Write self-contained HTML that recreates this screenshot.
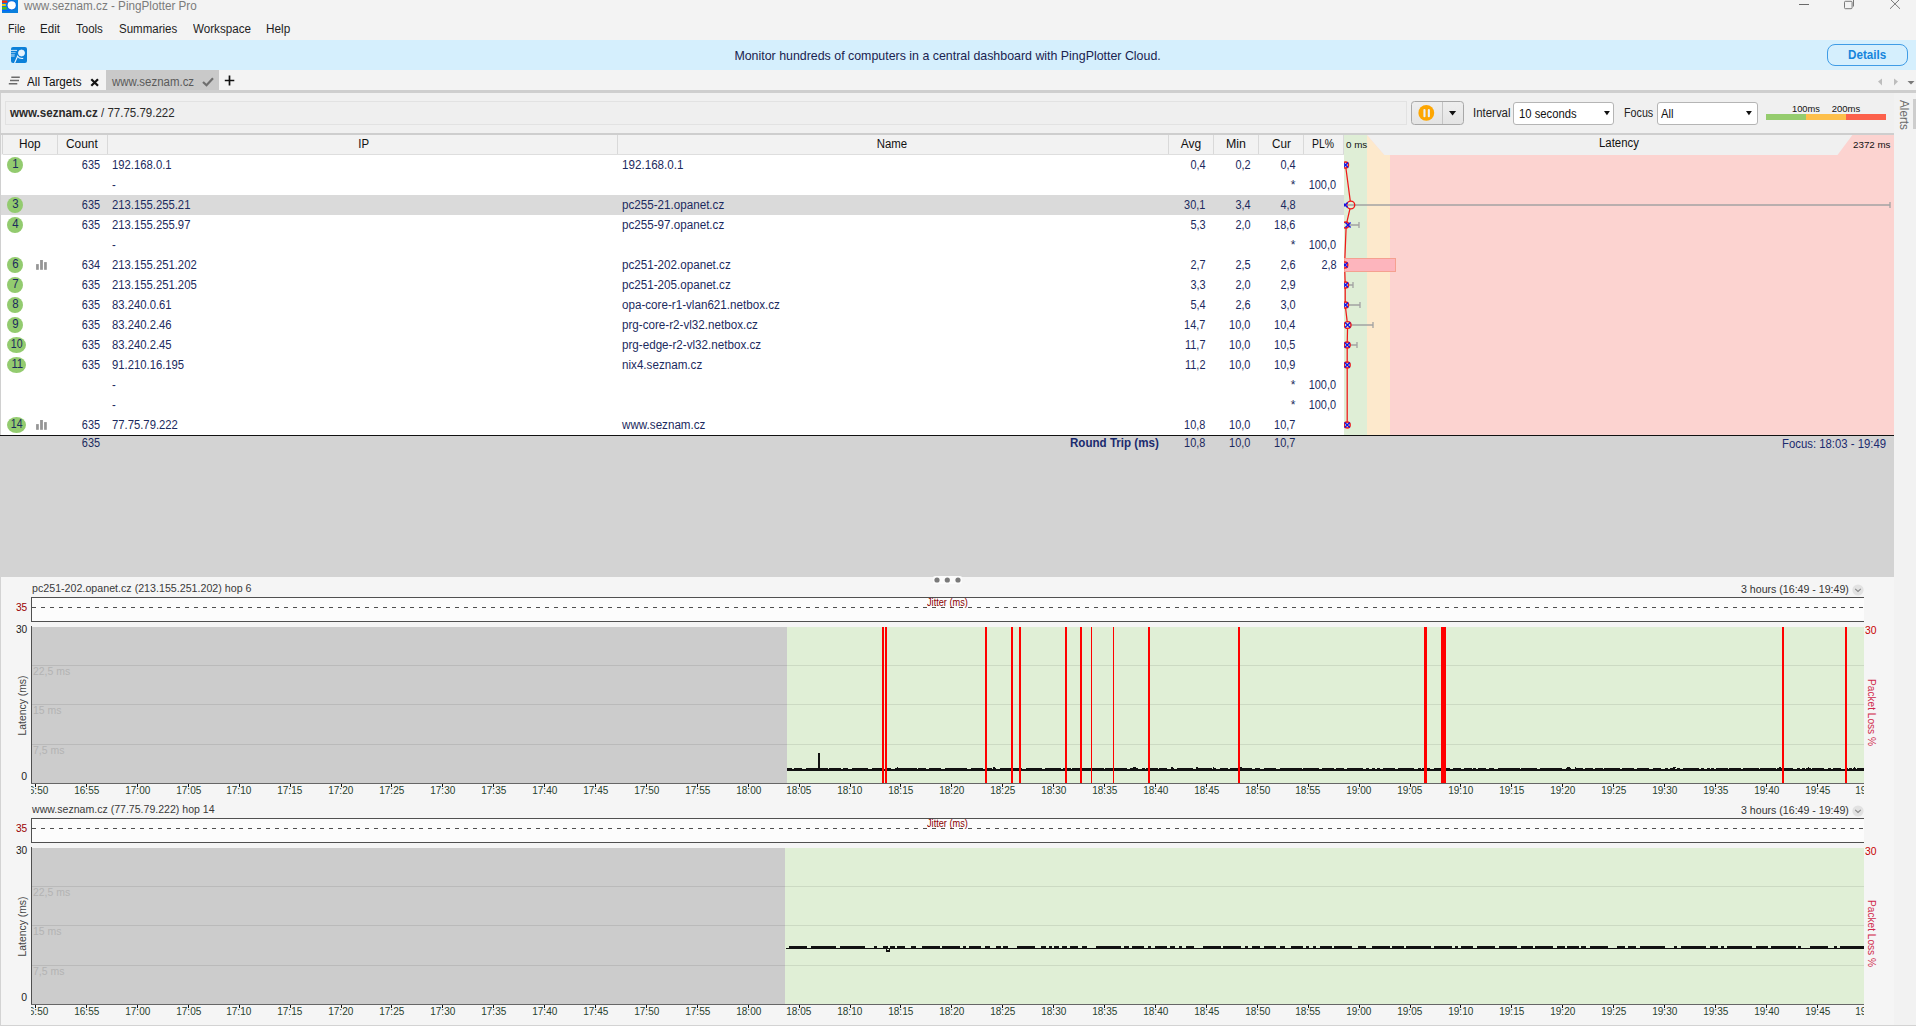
<!DOCTYPE html><html><head><meta charset="utf-8"><style>
*{margin:0;padding:0;box-sizing:border-box}
html,body{width:1916px;height:1026px;overflow:hidden;background:#f0f0f0;font-family:"Liberation Sans",sans-serif;font-size:12px;color:#000;position:relative}
.t{position:absolute;white-space:nowrap}
.b{position:absolute}
svg{position:absolute;overflow:visible}
</style></head><body>

<div class="b" style="left:0px;top:0px;width:1916px;height:40px;background:#f3f3f3;"></div>
<svg style="left:2px;top:0" width="17" height="14"><rect x="0" y="0" width="16" height="13" fill="#0a7fdc"/>
<rect x="0" y="0" width="5" height="0.7" fill="#7a6f80"/><rect x="0" y="0.8" width="5.4" height="2" fill="#ff2a00"/><rect x="0" y="4" width="3.8" height="1.9" fill="#ffcc00"/><rect x="0" y="7" width="4.6" height="2.4" fill="#55bb10"/><rect x="0" y="10" width="8" height="1.2" fill="#0066ff"/>
<circle cx="9.7" cy="5.3" r="4.9" fill="#0060e6"/><circle cx="9.7" cy="5.3" r="4.1" fill="#fff"/></svg>
<div class="t" style="left:24.30px;top:0.04px;font-size:12px;line-height:12px;color:#7b7b7b;transform:scaleX(0.9735);transform-origin:left 0;">www.seznam.cz - PingPlotter Pro</div>
<div class="b" style="left:1799px;top:4px;width:10px;height:1px;background:#6a6a6a"></div>
<svg style="left:1844px;top:0" width="12" height="10"><rect x="0.5" y="1.3" width="7.6" height="7.4" rx="1" fill="none" stroke="#6a6a6a" stroke-width="0.9"/><path d="M9.5 0V6.5" fill="none" stroke="#6a6a6a" stroke-width="0.9"/></svg>
<svg style="left:1889px;top:-1" width="13" height="11"><path d="M1 0 L11 9.8 M11 0 L1 9.8" stroke="#6a6a6a" stroke-width="0.9"/></svg>
<div class="t" style="left:7.50px;top:22.84px;font-size:12px;line-height:12px;color:#1e1e1e;transform:scaleX(0.8895);transform-origin:left 0;">File</div>
<div class="t" style="left:40.40px;top:22.84px;font-size:12px;line-height:12px;color:#1e1e1e;transform:scaleX(0.9624);transform-origin:left 0;">Edit</div>
<div class="t" style="left:76.20px;top:22.84px;font-size:12px;line-height:12px;color:#1e1e1e;transform:scaleX(0.9567);transform-origin:left 0;">Tools</div>
<div class="t" style="left:119.00px;top:22.84px;font-size:12px;line-height:12px;color:#1e1e1e;transform:scaleX(0.9591);transform-origin:left 0;">Summaries</div>
<div class="t" style="left:193.00px;top:22.84px;font-size:12px;line-height:12px;color:#1e1e1e;transform:scaleX(0.9699);transform-origin:left 0;">Workspace</div>
<div class="t" style="left:266.20px;top:22.84px;font-size:12px;line-height:12px;color:#1e1e1e;transform:scaleX(0.9805);transform-origin:left 0;">Help</div>
<div class="b" style="left:0px;top:40px;width:1916px;height:30px;background:#d5effd;"></div>
<svg style="left:11px;top:47px" width="16" height="16"><rect x="0" y="0" width="16" height="16" rx="2" fill="#0b80d9"/>
<path d="M0 3.4H6M0 9H3.6" stroke="#e6f4fd" stroke-width="0.9"/><path d="M0 5.5H4.6M0 7.4H3.8" stroke="#9fd0f3" stroke-width="0.8"/>
<circle cx="10.5" cy="6" r="3" fill="#e3f2fd" stroke="#f4faff" stroke-width="0.8"/>
<path d="M3.6 16 L6.6 9.2 Q8 11.8 12.2 11.4" stroke="#eef7fe" stroke-width="1.1" fill="none"/></svg>
<div class="t" style="left:734.40px;top:49.50px;font-size:12.4px;line-height:12.4px;color:#1a2350;">Monitor hundreds of computers in a central dashboard with PingPlotter Cloud.</div>
<div class="b" style="left:1826.5px;top:44.3px;width:81px;height:21.3px;border:1.7px solid #3f9ce6;border-radius:8px"></div>
<div class="t" style="left:1847.80px;top:48.84px;font-size:12px;line-height:12px;color:#1585dc;font-weight:bold;transform:scaleX(0.9707);transform-origin:left 0;">Details</div>
<div class="b" style="left:0px;top:70px;width:1916px;height:21px;background:#f3f3f3;"></div>
<svg style="left:8px;top:76px" width="13" height="9"><path d="M3.3 1.3h8.5M2 4.5h9M0.8 7.7h8.5" stroke="#6b6b6b" stroke-width="1.5"/></svg>
<div class="t" style="left:26.90px;top:75.84px;font-size:12px;line-height:12px;color:#111;transform:scaleX(0.9766);transform-origin:left 0;">All Targets</div>
<svg style="left:90px;top:78px" width="10" height="9"><path d="M1.3 1.2 L8 7.8 M8 1.2 L1.3 7.8" stroke="#111" stroke-width="2.2"/></svg>
<div class="b" style="left:106px;top:70px;width:113px;height:21px;background:#c9c9c9;"></div>
<div class="t" style="left:112.10px;top:75.84px;font-size:12px;line-height:12px;color:#5a5a5a;transform:scaleX(0.9544);transform-origin:left 0;">www.seznam.cz</div>
<svg style="left:202px;top:77px" width="12" height="10"><path d="M1 5 L4.5 8.3 L11 1.3" stroke="#6e6e6e" stroke-width="2.2" fill="none"/></svg>
<svg style="left:224px;top:75px" width="11" height="11"><path d="M5.5 0.5v10M0.8 5.5h9.5" stroke="#111" stroke-width="1.7"/></svg>
<svg style="left:1876px;top:77px" width="40" height="10"><path d="M6 1.5 L2 4.5 L6 8.5Z" fill="#bdbdbd"/><path d="M18 1.5 L22 4.5 L18 8.5Z" fill="#bdbdbd"/><path d="M31.5 4 L38.5 4 L35 7.5Z" fill="#7a7a7a"/></svg>
<div class="b" style="left:0px;top:90px;width:1916px;height:3px;background:#cecece;"></div>
<div class="b" style="left:0px;top:93px;width:1894px;height:40px;background:#f0f0f0;border-left:1px solid #d0d0d0"></div>
<div class="b" style="left:5px;top:101px;width:1402px;height:24px;border:1px solid #e2e2e2;background:#efefef"></div>
<div class="t" style="left:10.00px;top:106.84px;font-size:12px;line-height:12px;color:#2a2a2a;font-weight:bold;transform:scaleX(0.9646);transform-origin:left 0;">www.seznam.cz</div>
<div class="t" style="left:100.80px;top:106.84px;font-size:12px;line-height:12px;color:#2a2a2a;transform:scaleX(0.9591);transform-origin:left 0;">/ 77.75.79.222</div>
<div class="b" style="left:1410.5px;top:101px;width:53px;height:23.8px;border:1px solid #a8a8a8;border-radius:3.5px;background:linear-gradient(#eeeeee,#e4e4e4)"></div>
<div class="b" style="left:1441.5px;top:102px;width:1.2px;height:22px;background:#c4c4c4;"></div>
<svg style="left:1418px;top:105px" width="17" height="17"><circle cx="8.3" cy="7.9" r="7.9" fill="#fda602"/><rect x="5.4" y="4" width="2.1" height="8.3" rx="1" fill="#e8f1ff"/><rect x="9.8" y="4" width="2.1" height="8.3" rx="1" fill="#e8f1ff"/></svg>
<svg style="left:1448.9px;top:110.8px" width="8" height="5"><path d="M0 0h7.1L3.55 4.4Z" fill="#111"/></svg>
<div class="t" style="left:1472.50px;top:107.04px;font-size:12px;line-height:12px;color:#222;transform:scaleX(0.9529);transform-origin:left 0;">Interval</div>
<div class="b" style="left:1513.4px;top:101.5px;width:101px;height:23px;border:1px solid #b5b5b5;border-radius:3px;background:#fff"></div>
<div class="t" style="left:1519.30px;top:107.84px;font-size:12px;line-height:12px;color:#111;transform:scaleX(0.9384);transform-origin:left 0;">10 seconds</div>
<svg style="left:1603.6px;top:111px" width="7" height="5"><path d="M0 0h5.9L2.95 4.2Z" fill="#111"/></svg>
<div class="t" style="left:1623.70px;top:107.04px;font-size:12px;line-height:12px;color:#222;transform:scaleX(0.8936);transform-origin:left 0;">Focus</div>
<div class="b" style="left:1656.6px;top:101.5px;width:101px;height:23px;border:1px solid #b5b5b5;border-radius:3px;background:#fff"></div>
<div class="t" style="left:1661.20px;top:107.84px;font-size:12px;line-height:12px;color:#111;transform:scaleX(0.9447);transform-origin:left 0;">All</div>
<svg style="left:1746.4px;top:111px" width="7" height="5"><path d="M0 0h5.9L2.95 4.2Z" fill="#111"/></svg>
<div class="t" style="left:1792.20px;top:103.56px;font-size:9.5px;line-height:9.5px;color:#111;transform:scaleX(0.9784);transform-origin:left 0;">100ms</div>
<div class="t" style="left:1831.70px;top:103.56px;font-size:9.5px;line-height:9.5px;color:#111;">200ms</div>
<div class="b" style="left:1766px;top:114px;width:40px;height:6px;background:#95cc6e;"></div>
<div class="b" style="left:1806px;top:114px;width:40px;height:6px;background:#fdbf4b;"></div>
<div class="b" style="left:1846px;top:114px;width:40px;height:6px;background:#fc614c;"></div>
<div class="b" style="left:1894px;top:93px;width:22px;height:933px;background:#f2f2f2;"></div>
<div class="b" style="left:1913px;top:99px;width:3px;height:30px;background:#cdcdcd;"></div>
<div class="t" style="left:1889.26px;top:108.84px;font-size:12px;line-height:12px;color:#6a6a6a;transform:rotate(90deg) scaleX(0.9780);transform-origin:center center;">Alerts</div>
<div class="b" style="left:0px;top:133px;width:1894px;height:2px;background:#cecece;"></div>
<div class="b" style="left:0px;top:135px;width:1344px;height:20px;background:#f2f2f2;border-left:1px solid #d0d0d0"></div>
<div class="b" style="left:3px;top:154px;width:1341px;height:1px;background:#dedede;"></div>
<div class="b" style="left:2px;top:135px;width:1px;height:19px;background:#d6d6d6;"></div>
<div class="b" style="left:57px;top:135px;width:1px;height:19px;background:#d9d9d9;"></div>
<div class="b" style="left:107px;top:135px;width:1px;height:19px;background:#d9d9d9;"></div>
<div class="b" style="left:617px;top:135px;width:1px;height:19px;background:#d9d9d9;"></div>
<div class="b" style="left:1168px;top:135px;width:1px;height:19px;background:#d9d9d9;"></div>
<div class="b" style="left:1213px;top:135px;width:1px;height:19px;background:#d9d9d9;"></div>
<div class="b" style="left:1258px;top:135px;width:1px;height:19px;background:#d9d9d9;"></div>
<div class="b" style="left:1303px;top:135px;width:1px;height:19px;background:#d9d9d9;"></div>
<div class="b" style="left:1343px;top:135px;width:1px;height:19px;background:#d9d9d9;"></div>
<div class="t" style="left:19.40px;top:137.84px;font-size:12px;line-height:12px;color:#111;transform:scaleX(0.9857);transform-origin:left 0;">Hop</div>
<div class="t" style="left:66.20px;top:137.84px;font-size:12px;line-height:12px;color:#111;transform:scaleX(0.9931);transform-origin:left 0;">Count</div>
<div class="t" style="left:1180.80px;top:137.84px;font-size:12px;line-height:12px;color:#111;">Avg</div>
<div class="t" style="left:1226.40px;top:137.84px;font-size:12px;line-height:12px;color:#111;transform:scaleX(1.0291);transform-origin:left 0;">Min</div>
<div class="t" style="left:1271.80px;top:137.84px;font-size:12px;line-height:12px;color:#111;transform:scaleX(0.9722);transform-origin:left 0;">Cur</div>
<div class="t" style="left:1312.00px;top:137.84px;font-size:12px;line-height:12px;color:#111;transform:scaleX(0.8679);transform-origin:left 0;">PL%</div>
<div class="t" style="left:358.33px;top:137.84px;font-size:12px;line-height:12px;color:#111;transform:scaleX(0.9500);transform-origin:center 0;">IP</div>
<div class="t" style="left:875.99px;top:137.84px;font-size:12px;line-height:12px;color:#111;transform:scaleX(0.9500);transform-origin:center 0;">Name</div>
<div class="b" style="left:0px;top:155px;width:1344px;height:280px;background:#ffffff;border-left:1px solid #d0d0d0"></div>
<div class="b" style="left:7.2px;top:157.2px;width:15.9px;height:15.9px;border-radius:50%;background:#93cb6f"></div>
<div class="t" style="left:11.86px;top:157.84px;font-size:12px;line-height:12px;color:#1b2a5e;transform:scaleX(0.9500);transform-origin:center 0;">1</div>
<div class="t" style="left:80.48px;top:158.84px;font-size:12px;line-height:12px;color:#1b2a5e;transform:scaleX(0.9100);transform-origin:right 0;">635</div>
<div class="t" style="left:112.00px;top:158.84px;font-size:12px;line-height:12px;color:#1b2a5e;transform:scaleX(0.9400);transform-origin:left 0;">192.168.0.1</div>
<div class="t" style="left:622.00px;top:158.84px;font-size:12px;line-height:12px;color:#1b2a5e;transform:scaleX(0.9700);transform-origin:left 0;">192.168.0.1</div>
<div class="t" style="left:1188.82px;top:158.84px;font-size:12px;line-height:12px;color:#1b2a5e;transform:scaleX(0.9100);transform-origin:right 0;">0,4</div>
<div class="t" style="left:1233.82px;top:158.84px;font-size:12px;line-height:12px;color:#1b2a5e;transform:scaleX(0.9100);transform-origin:right 0;">0,2</div>
<div class="t" style="left:1278.82px;top:158.84px;font-size:12px;line-height:12px;color:#1b2a5e;transform:scaleX(0.9100);transform-origin:right 0;">0,4</div>
<div class="t" style="left:112.00px;top:178.84px;font-size:12px;line-height:12px;color:#1b2a5e;transform:scaleX(0.9400);transform-origin:left 0;">-</div>
<div class="t" style="left:1290.83px;top:178.84px;font-size:12px;line-height:12px;color:#1b2a5e;">*</div>
<div class="t" style="left:1306.27px;top:178.84px;font-size:12px;line-height:12px;color:#1b2a5e;transform:scaleX(0.9100);transform-origin:right 0;">100,0</div>
<div class="b" style="left:1px;top:195px;width:1343px;height:20px;background:#dadada;"></div>
<div class="b" style="left:7.2px;top:197.2px;width:15.9px;height:15.9px;border-radius:50%;background:#93cb6f"></div>
<div class="t" style="left:11.86px;top:197.84px;font-size:12px;line-height:12px;color:#1b2a5e;transform:scaleX(0.9500);transform-origin:center 0;">3</div>
<div class="t" style="left:80.48px;top:198.84px;font-size:12px;line-height:12px;color:#1b2a5e;transform:scaleX(0.9100);transform-origin:right 0;">635</div>
<div class="t" style="left:112.00px;top:198.84px;font-size:12px;line-height:12px;color:#1b2a5e;transform:scaleX(0.9400);transform-origin:left 0;">213.155.255.21</div>
<div class="t" style="left:622.00px;top:198.84px;font-size:12px;line-height:12px;color:#1b2a5e;transform:scaleX(0.9700);transform-origin:left 0;">pc255-21.opanet.cz</div>
<div class="t" style="left:1182.14px;top:198.84px;font-size:12px;line-height:12px;color:#1b2a5e;transform:scaleX(0.9100);transform-origin:right 0;">30,1</div>
<div class="t" style="left:1233.82px;top:198.84px;font-size:12px;line-height:12px;color:#1b2a5e;transform:scaleX(0.9100);transform-origin:right 0;">3,4</div>
<div class="t" style="left:1278.82px;top:198.84px;font-size:12px;line-height:12px;color:#1b2a5e;transform:scaleX(0.9100);transform-origin:right 0;">4,8</div>
<div class="b" style="left:7.2px;top:217.2px;width:15.9px;height:15.9px;border-radius:50%;background:#93cb6f"></div>
<div class="t" style="left:11.86px;top:217.84px;font-size:12px;line-height:12px;color:#1b2a5e;transform:scaleX(0.9500);transform-origin:center 0;">4</div>
<div class="t" style="left:80.48px;top:218.84px;font-size:12px;line-height:12px;color:#1b2a5e;transform:scaleX(0.9100);transform-origin:right 0;">635</div>
<div class="t" style="left:112.00px;top:218.84px;font-size:12px;line-height:12px;color:#1b2a5e;transform:scaleX(0.9400);transform-origin:left 0;">213.155.255.97</div>
<div class="t" style="left:622.00px;top:218.84px;font-size:12px;line-height:12px;color:#1b2a5e;transform:scaleX(0.9700);transform-origin:left 0;">pc255-97.opanet.cz</div>
<div class="t" style="left:1188.82px;top:218.84px;font-size:12px;line-height:12px;color:#1b2a5e;transform:scaleX(0.9100);transform-origin:right 0;">5,3</div>
<div class="t" style="left:1233.82px;top:218.84px;font-size:12px;line-height:12px;color:#1b2a5e;transform:scaleX(0.9100);transform-origin:right 0;">2,0</div>
<div class="t" style="left:1272.14px;top:218.84px;font-size:12px;line-height:12px;color:#1b2a5e;transform:scaleX(0.9100);transform-origin:right 0;">18,6</div>
<div class="t" style="left:112.00px;top:238.84px;font-size:12px;line-height:12px;color:#1b2a5e;transform:scaleX(0.9400);transform-origin:left 0;">-</div>
<div class="t" style="left:1290.83px;top:238.84px;font-size:12px;line-height:12px;color:#1b2a5e;">*</div>
<div class="t" style="left:1306.27px;top:238.84px;font-size:12px;line-height:12px;color:#1b2a5e;transform:scaleX(0.9100);transform-origin:right 0;">100,0</div>
<div class="b" style="left:7.2px;top:257.2px;width:15.9px;height:15.9px;border-radius:50%;background:#93cb6f"></div>
<div class="t" style="left:11.86px;top:257.84px;font-size:12px;line-height:12px;color:#1b2a5e;transform:scaleX(0.9500);transform-origin:center 0;">6</div>
<svg style="left:36px;top:255px" width="12" height="16"><rect x="0.1" y="9.1" width="2.7" height="5.7" fill="#959595"/><rect x="4.1" y="5" width="2.8" height="9.8" fill="#959595"/><rect x="8.1" y="7.1" width="2.7" height="7.7" fill="#959595"/></svg>
<div class="t" style="left:80.48px;top:258.84px;font-size:12px;line-height:12px;color:#1b2a5e;transform:scaleX(0.9100);transform-origin:right 0;">634</div>
<div class="t" style="left:112.00px;top:258.84px;font-size:12px;line-height:12px;color:#1b2a5e;transform:scaleX(0.9400);transform-origin:left 0;">213.155.251.202</div>
<div class="t" style="left:622.00px;top:258.84px;font-size:12px;line-height:12px;color:#1b2a5e;transform:scaleX(0.9700);transform-origin:left 0;">pc251-202.opanet.cz</div>
<div class="t" style="left:1188.82px;top:258.84px;font-size:12px;line-height:12px;color:#1b2a5e;transform:scaleX(0.9100);transform-origin:right 0;">2,7</div>
<div class="t" style="left:1233.82px;top:258.84px;font-size:12px;line-height:12px;color:#1b2a5e;transform:scaleX(0.9100);transform-origin:right 0;">2,5</div>
<div class="t" style="left:1278.82px;top:258.84px;font-size:12px;line-height:12px;color:#1b2a5e;transform:scaleX(0.9100);transform-origin:right 0;">2,6</div>
<div class="t" style="left:1319.62px;top:258.84px;font-size:12px;line-height:12px;color:#1b2a5e;transform:scaleX(0.9100);transform-origin:right 0;">2,8</div>
<div class="b" style="left:7.2px;top:277.2px;width:15.9px;height:15.9px;border-radius:50%;background:#93cb6f"></div>
<div class="t" style="left:11.86px;top:277.84px;font-size:12px;line-height:12px;color:#1b2a5e;transform:scaleX(0.9500);transform-origin:center 0;">7</div>
<div class="t" style="left:80.48px;top:278.84px;font-size:12px;line-height:12px;color:#1b2a5e;transform:scaleX(0.9100);transform-origin:right 0;">635</div>
<div class="t" style="left:112.00px;top:278.84px;font-size:12px;line-height:12px;color:#1b2a5e;transform:scaleX(0.9400);transform-origin:left 0;">213.155.251.205</div>
<div class="t" style="left:622.00px;top:278.84px;font-size:12px;line-height:12px;color:#1b2a5e;transform:scaleX(0.9700);transform-origin:left 0;">pc251-205.opanet.cz</div>
<div class="t" style="left:1188.82px;top:278.84px;font-size:12px;line-height:12px;color:#1b2a5e;transform:scaleX(0.9100);transform-origin:right 0;">3,3</div>
<div class="t" style="left:1233.82px;top:278.84px;font-size:12px;line-height:12px;color:#1b2a5e;transform:scaleX(0.9100);transform-origin:right 0;">2,0</div>
<div class="t" style="left:1278.82px;top:278.84px;font-size:12px;line-height:12px;color:#1b2a5e;transform:scaleX(0.9100);transform-origin:right 0;">2,9</div>
<div class="b" style="left:7.2px;top:297.2px;width:15.9px;height:15.9px;border-radius:50%;background:#93cb6f"></div>
<div class="t" style="left:11.86px;top:297.84px;font-size:12px;line-height:12px;color:#1b2a5e;transform:scaleX(0.9500);transform-origin:center 0;">8</div>
<div class="t" style="left:80.48px;top:298.84px;font-size:12px;line-height:12px;color:#1b2a5e;transform:scaleX(0.9100);transform-origin:right 0;">635</div>
<div class="t" style="left:112.00px;top:298.84px;font-size:12px;line-height:12px;color:#1b2a5e;transform:scaleX(0.9400);transform-origin:left 0;">83.240.0.61</div>
<div class="t" style="left:622.00px;top:298.84px;font-size:12px;line-height:12px;color:#1b2a5e;transform:scaleX(0.9700);transform-origin:left 0;">opa-core-r1-vlan621.netbox.cz</div>
<div class="t" style="left:1188.82px;top:298.84px;font-size:12px;line-height:12px;color:#1b2a5e;transform:scaleX(0.9100);transform-origin:right 0;">5,4</div>
<div class="t" style="left:1233.82px;top:298.84px;font-size:12px;line-height:12px;color:#1b2a5e;transform:scaleX(0.9100);transform-origin:right 0;">2,6</div>
<div class="t" style="left:1278.82px;top:298.84px;font-size:12px;line-height:12px;color:#1b2a5e;transform:scaleX(0.9100);transform-origin:right 0;">3,0</div>
<div class="b" style="left:7.2px;top:317.2px;width:15.9px;height:15.9px;border-radius:50%;background:#93cb6f"></div>
<div class="t" style="left:11.86px;top:317.84px;font-size:12px;line-height:12px;color:#1b2a5e;transform:scaleX(0.9500);transform-origin:center 0;">9</div>
<div class="t" style="left:80.48px;top:318.84px;font-size:12px;line-height:12px;color:#1b2a5e;transform:scaleX(0.9100);transform-origin:right 0;">635</div>
<div class="t" style="left:112.00px;top:318.84px;font-size:12px;line-height:12px;color:#1b2a5e;transform:scaleX(0.9400);transform-origin:left 0;">83.240.2.46</div>
<div class="t" style="left:622.00px;top:318.84px;font-size:12px;line-height:12px;color:#1b2a5e;transform:scaleX(0.9700);transform-origin:left 0;">prg-core-r2-vl32.netbox.cz</div>
<div class="t" style="left:1182.14px;top:318.84px;font-size:12px;line-height:12px;color:#1b2a5e;transform:scaleX(0.9100);transform-origin:right 0;">14,7</div>
<div class="t" style="left:1227.14px;top:318.84px;font-size:12px;line-height:12px;color:#1b2a5e;transform:scaleX(0.9100);transform-origin:right 0;">10,0</div>
<div class="t" style="left:1272.14px;top:318.84px;font-size:12px;line-height:12px;color:#1b2a5e;transform:scaleX(0.9100);transform-origin:right 0;">10,4</div>
<div class="b" style="left:7px;top:337px;width:19px;height:16px;border-radius:50%;background:#93cb6f"></div>
<div class="t" style="left:10.13px;top:337.84px;font-size:12px;line-height:12px;color:#1b2a5e;transform:scaleX(0.8765);transform-origin:center 0;">10</div>
<div class="t" style="left:80.48px;top:338.84px;font-size:12px;line-height:12px;color:#1b2a5e;transform:scaleX(0.9100);transform-origin:right 0;">635</div>
<div class="t" style="left:112.00px;top:338.84px;font-size:12px;line-height:12px;color:#1b2a5e;transform:scaleX(0.9400);transform-origin:left 0;">83.240.2.45</div>
<div class="t" style="left:622.00px;top:338.84px;font-size:12px;line-height:12px;color:#1b2a5e;transform:scaleX(0.9700);transform-origin:left 0;">prg-edge-r2-vl32.netbox.cz</div>
<div class="t" style="left:1183.03px;top:338.84px;font-size:12px;line-height:12px;color:#1b2a5e;transform:scaleX(0.9100);transform-origin:right 0;">11,7</div>
<div class="t" style="left:1227.14px;top:338.84px;font-size:12px;line-height:12px;color:#1b2a5e;transform:scaleX(0.9100);transform-origin:right 0;">10,0</div>
<div class="t" style="left:1272.14px;top:338.84px;font-size:12px;line-height:12px;color:#1b2a5e;transform:scaleX(0.9100);transform-origin:right 0;">10,5</div>
<div class="b" style="left:7px;top:357px;width:19px;height:16px;border-radius:50%;background:#93cb6f"></div>
<div class="t" style="left:10.57px;top:357.84px;font-size:12px;line-height:12px;color:#1b2a5e;transform:scaleX(0.9392);transform-origin:center 0;">11</div>
<div class="t" style="left:80.48px;top:358.84px;font-size:12px;line-height:12px;color:#1b2a5e;transform:scaleX(0.9100);transform-origin:right 0;">635</div>
<div class="t" style="left:112.00px;top:358.84px;font-size:12px;line-height:12px;color:#1b2a5e;transform:scaleX(0.9400);transform-origin:left 0;">91.210.16.195</div>
<div class="t" style="left:622.00px;top:358.84px;font-size:12px;line-height:12px;color:#1b2a5e;transform:scaleX(0.9700);transform-origin:left 0;">nix4.seznam.cz</div>
<div class="t" style="left:1183.03px;top:358.84px;font-size:12px;line-height:12px;color:#1b2a5e;transform:scaleX(0.9100);transform-origin:right 0;">11,2</div>
<div class="t" style="left:1227.14px;top:358.84px;font-size:12px;line-height:12px;color:#1b2a5e;transform:scaleX(0.9100);transform-origin:right 0;">10,0</div>
<div class="t" style="left:1272.14px;top:358.84px;font-size:12px;line-height:12px;color:#1b2a5e;transform:scaleX(0.9100);transform-origin:right 0;">10,9</div>
<div class="t" style="left:112.00px;top:378.84px;font-size:12px;line-height:12px;color:#1b2a5e;transform:scaleX(0.9400);transform-origin:left 0;">-</div>
<div class="t" style="left:1290.83px;top:378.84px;font-size:12px;line-height:12px;color:#1b2a5e;">*</div>
<div class="t" style="left:1306.27px;top:378.84px;font-size:12px;line-height:12px;color:#1b2a5e;transform:scaleX(0.9100);transform-origin:right 0;">100,0</div>
<div class="t" style="left:112.00px;top:398.84px;font-size:12px;line-height:12px;color:#1b2a5e;transform:scaleX(0.9400);transform-origin:left 0;">-</div>
<div class="t" style="left:1290.83px;top:398.84px;font-size:12px;line-height:12px;color:#1b2a5e;">*</div>
<div class="t" style="left:1306.27px;top:398.84px;font-size:12px;line-height:12px;color:#1b2a5e;transform:scaleX(0.9100);transform-origin:right 0;">100,0</div>
<div class="b" style="left:7px;top:417px;width:19px;height:16px;border-radius:50%;background:#93cb6f"></div>
<div class="t" style="left:10.13px;top:417.84px;font-size:12px;line-height:12px;color:#1b2a5e;transform:scaleX(0.8765);transform-origin:center 0;">14</div>
<svg style="left:36px;top:415px" width="12" height="16"><rect x="0.1" y="9.1" width="2.7" height="5.7" fill="#959595"/><rect x="4.1" y="5" width="2.8" height="9.8" fill="#959595"/><rect x="8.1" y="7.1" width="2.7" height="7.7" fill="#959595"/></svg>
<div class="t" style="left:80.48px;top:418.84px;font-size:12px;line-height:12px;color:#1b2a5e;transform:scaleX(0.9100);transform-origin:right 0;">635</div>
<div class="t" style="left:112.00px;top:418.84px;font-size:12px;line-height:12px;color:#1b2a5e;transform:scaleX(0.9400);transform-origin:left 0;">77.75.79.222</div>
<div class="t" style="left:622.00px;top:418.84px;font-size:12px;line-height:12px;color:#1b2a5e;transform:scaleX(0.9700);transform-origin:left 0;">www.seznam.cz</div>
<div class="t" style="left:1182.14px;top:418.84px;font-size:12px;line-height:12px;color:#1b2a5e;transform:scaleX(0.9100);transform-origin:right 0;">10,8</div>
<div class="t" style="left:1227.14px;top:418.84px;font-size:12px;line-height:12px;color:#1b2a5e;transform:scaleX(0.9100);transform-origin:right 0;">10,0</div>
<div class="t" style="left:1272.14px;top:418.84px;font-size:12px;line-height:12px;color:#1b2a5e;transform:scaleX(0.9100);transform-origin:right 0;">10,7</div>
<div class="b" style="left:1344px;top:135px;width:550px;height:300px;background:#fcd3d0;"></div>
<div class="b" style="left:1344px;top:135px;width:23px;height:300px;background:#dfeed6;"></div>
<div class="b" style="left:1367px;top:155px;width:23px;height:280px;background:#fde9cc;"></div>
<svg style="left:1367px;top:135px" width="527" height="20"><path d="M0 0 L17.3 20 L0 20Z" fill="#fde9cc"/><path d="M0 0 L485.4 0 L470.5 20 L17.3 20Z" fill="#f0f0f0"/></svg>
<div class="t" style="left:1345.90px;top:140.04px;font-size:9.4px;line-height:9.4px;color:#111;transform:scaleX(1.0457);transform-origin:left 0;">0 ms</div>
<div class="t" style="left:1598.50px;top:136.64px;font-size:12px;line-height:12px;color:#111;transform:scaleX(0.9493);transform-origin:left 0;">Latency</div>
<div class="t" style="left:1853.10px;top:139.74px;font-size:9.4px;line-height:9.4px;color:#111;transform:scaleX(1.0429);transform-origin:left 0;">2372 ms</div>
<svg style="left:1344px;top:156px;overflow:hidden" width="550" height="279"><path d="M1.89 11.97L6.29 45.13M5.93 52.80L2.87 66.08M2.08 72.00L0.72 106.00M0.69 112.00L1.11 126.00M1.20 132.00L1.20 146.00M1.56 151.98L3.19 165.62M3.53 172.40L3.26 186.00M3.20 192.00L3.20 206.00M3.20 212.00L3.20 266.00" fill="none" stroke="#f01818" stroke-width="1.25"/><path d="M4 49H546M546 46V52" stroke="#a3a3a3" stroke-width="1.3" fill="none"/><path d="M6 69H15M15 66V72" stroke="#a3a3a3" stroke-width="1.3" fill="none"/><path d="M5 129H9M9 126V132" stroke="#a3a3a3" stroke-width="1.3" fill="none"/><path d="M5 149H16M16 146V152" stroke="#a3a3a3" stroke-width="1.3" fill="none"/><path d="M7 169H29M29 166V172" stroke="#a3a3a3" stroke-width="1.3" fill="none"/><path d="M6 189H13M13 186V192" stroke="#a3a3a3" stroke-width="1.3" fill="none"/><rect x="0.5" y="102.5" width="51" height="13" fill="#fdb5bd" stroke="#f5a090" stroke-width="1"/><circle cx="1.5" cy="9" r="3" fill="none" stroke="#f01818" stroke-width="1.4"/><path d="M-1.1 6.4L4.1 11.6M4.1 6.4L-1.1 11.6" stroke="#1414e6" stroke-width="1.4"/><circle cx="6.8" cy="49" r="3.9" fill="none" stroke="#f01818" stroke-width="1.4"/><path d="M-1.6 46.4L3.6 51.6M3.6 46.4L-1.6 51.6" stroke="#1414e6" stroke-width="1.4"/><circle cx="1.8" cy="69" r="3" fill="none" stroke="#f01818" stroke-width="1.4"/><path d="M1.4 66.4L6.6 71.6M6.6 66.4L1.4 71.6" stroke="#1414e6" stroke-width="1.4"/><circle cx="0.8" cy="109" r="3" fill="none" stroke="#f01818" stroke-width="1.4"/><path d="M-1.6 106.4L3.6 111.6M3.6 106.4L-1.6 111.6" stroke="#1414e6" stroke-width="1.4"/><circle cx="1.5" cy="129" r="3" fill="none" stroke="#f01818" stroke-width="1.4"/><path d="M-1.1 126.4L4.1 131.6M4.1 126.4L-1.1 131.6" stroke="#1414e6" stroke-width="1.4"/><circle cx="1.5" cy="149" r="3" fill="none" stroke="#f01818" stroke-width="1.4"/><path d="M-1.1 146.4L4.1 151.6M4.1 146.4L-1.1 151.6" stroke="#1414e6" stroke-width="1.4"/><circle cx="3.6" cy="169" r="3.4" fill="none" stroke="#f01818" stroke-width="1.4"/><path d="M1.0 166.4L6.2 171.6M6.2 166.4L1.0 171.6" stroke="#1414e6" stroke-width="1.4"/><circle cx="3.2" cy="189" r="3" fill="none" stroke="#f01818" stroke-width="1.4"/><path d="M0.6000000000000001 186.4L5.800000000000001 191.6M5.800000000000001 186.4L0.6000000000000001 191.6" stroke="#1414e6" stroke-width="1.4"/><circle cx="3.2" cy="209" r="3" fill="none" stroke="#f01818" stroke-width="1.4"/><path d="M0.6000000000000001 206.4L5.800000000000001 211.6M5.800000000000001 206.4L0.6000000000000001 211.6" stroke="#1414e6" stroke-width="1.4"/><circle cx="3.2" cy="269" r="3" fill="none" stroke="#f01818" stroke-width="1.4"/><path d="M0.6000000000000001 266.4L5.800000000000001 271.6M5.800000000000001 266.4L0.6000000000000001 271.6" stroke="#1414e6" stroke-width="1.4"/></svg>
<div class="b" style="left:0px;top:434.5px;width:1894px;height:1.6px;background:#111;"></div>
<div class="b" style="left:0px;top:436px;width:1894px;height:141px;background:#d3d3d3;"></div>
<div class="t" style="left:80.48px;top:437.34px;font-size:12px;line-height:12px;color:#1b2a5e;transform:scaleX(0.9100);transform-origin:right 0;">635</div>
<div class="t" style="left:1070.40px;top:437.34px;font-size:12px;line-height:12px;color:#1a2a6e;font-weight:bold;transform:scaleX(0.9653);transform-origin:left 0;">Round Trip (ms)</div>
<div class="t" style="left:1182.14px;top:437.34px;font-size:12px;line-height:12px;color:#1b2a5e;transform:scaleX(0.9100);transform-origin:right 0;">10,8</div>
<div class="t" style="left:1227.14px;top:437.34px;font-size:12px;line-height:12px;color:#1b2a5e;transform:scaleX(0.9100);transform-origin:right 0;">10,0</div>
<div class="t" style="left:1272.14px;top:437.34px;font-size:12px;line-height:12px;color:#1b2a5e;transform:scaleX(0.9100);transform-origin:right 0;">10,7</div>
<div class="t" style="left:1782.00px;top:437.64px;font-size:12px;line-height:12px;color:#1a2a6e;transform:scaleX(0.9449);transform-origin:left 0;">Focus: 18:03 - 19:49</div>
<div class="b" style="left:0px;top:577px;width:1894px;height:449px;background:#f5f5f5;border-left:1px solid #d3d3d3"></div>
<div class="b" style="left:933px;top:576px;width:29px;height:8px;background:#fbfbfb;border-radius:2px"></div>
<svg style="left:933px;top:576px" width="30" height="8"><circle cx="4" cy="4" r="2.6" fill="#7a7a7a"/><circle cx="14.3" cy="4" r="2.6" fill="#7a7a7a"/><circle cx="25" cy="4" r="2.6" fill="#7a7a7a"/></svg>
<div class="b" style="left:0px;top:1025px;width:1916px;height:1px;background:#d3d3d3;"></div>
<div class="t" style="left:31.50px;top:583.29px;font-size:11px;line-height:11px;color:#3a3a3a;transform:scaleX(0.9700);transform-origin:left 0;">pc251-202.opanet.cz (213.155.251.202) hop 6</div>
<div class="t" style="left:1740.50px;top:583.87px;font-size:11.5px;line-height:11.5px;color:#333;transform:scaleX(0.9223);transform-origin:left 0;">3 hours (16:49 - 19:49)</div>
<svg style="left:1852px;top:583.5px" width="12" height="12"><circle cx="6" cy="6" r="5.6" fill="#e2e2e2"/><path d="M3.2 4.8L6 7.5L8.8 4.8" stroke="#8a8a8a" stroke-width="1.1" fill="none"/></svg>
<div class="b" style="left:31px;top:597px;width:1833px;height:25px;background:#fcfcfc;border-top:1px solid #505050;border-bottom:1px solid #505050;border-left:1px solid #505050"></div>
<svg style="left:32px;top:607px" width="1832" height="1"><line x1="0" y1="0.5" x2="1832" y2="0.5" stroke="#505050" stroke-width="1" stroke-dasharray="4 5"/></svg>
<div class="t" style="left:927.00px;top:597.53px;font-size:10px;line-height:10px;color:#8b0000;transform:scaleX(0.9181);transform-origin:left 0;">Jitter (ms)</div>
<div class="t" style="left:15.36px;top:601.79px;font-size:11px;line-height:11px;color:#990000;transform:scaleX(0.9235);transform-origin:right 0;">35</div>
<div class="t" style="left:15.36px;top:623.69px;font-size:11px;line-height:11px;color:#222;transform:scaleX(0.9235);transform-origin:right 0;">30</div>
<div class="t" style="left:21.48px;top:770.69px;font-size:11px;line-height:11px;color:#222;transform:scaleX(0.9500);transform-origin:right 0;">0</div>
<svg style="left:31px;top:626px;overflow:hidden" width="1833" height="158" shape-rendering="crispEdges"><rect x="1" y="1" width="755" height="156" fill="#cccccc"/><rect x="756" y="1" width="1077" height="156" fill="#e0efd6"/><rect x="1" y="39" width="1832" height="1" fill="rgba(0,0,0,0.085)"/><rect x="1" y="78" width="1832" height="1" fill="rgba(0,0,0,0.085)"/><rect x="1" y="118" width="1832" height="1" fill="rgba(0,0,0,0.085)"/><rect x="0" y="0" width="1" height="158" fill="#505050"/><rect x="0" y="157" width="1833" height="1" fill="#666"/><rect x="756" y="143" width="1077" height="2" fill="#111"/><rect x="756" y="142" width="5" height="1" fill="#111"/><rect x="763" y="142" width="8" height="1" fill="#111"/><rect x="775" y="142" width="22" height="1" fill="#111"/><rect x="798" y="142" width="12" height="1" fill="#111"/><rect x="812" y="142" width="5" height="1" fill="#111"/><rect x="821" y="142" width="16" height="1" fill="#111"/><rect x="841" y="142" width="12" height="1" fill="#111"/><rect x="855" y="142" width="5" height="1" fill="#111"/><rect x="864" y="142" width="22" height="1" fill="#111"/><rect x="866" y="141" width="1" height="1" fill="#111"/><rect x="887" y="142" width="8" height="1" fill="#111"/><rect x="898" y="142" width="12" height="1" fill="#111"/><rect x="914" y="142" width="22" height="1" fill="#111"/><rect x="940" y="142" width="12" height="1" fill="#111"/><rect x="956" y="142" width="5" height="1" fill="#111"/><rect x="962" y="142" width="3" height="1" fill="#111"/><rect x="962" y="141" width="2" height="1" fill="#111"/><rect x="969" y="142" width="22" height="1" fill="#111"/><rect x="995" y="142" width="16" height="1" fill="#111"/><rect x="1014" y="142" width="16" height="1" fill="#111"/><rect x="1032" y="142" width="8" height="1" fill="#111"/><rect x="1041" y="142" width="8" height="1" fill="#111"/><rect x="1051" y="142" width="22" height="1" fill="#111"/><rect x="1074" y="142" width="22" height="1" fill="#111"/><rect x="1099" y="142" width="8" height="1" fill="#111"/><rect x="1102" y="141" width="3" height="1" fill="#111"/><rect x="1111" y="142" width="3" height="1" fill="#111"/><rect x="1115" y="142" width="12" height="1" fill="#111"/><rect x="1128" y="142" width="8" height="1" fill="#111"/><rect x="1140" y="142" width="3" height="1" fill="#111"/><rect x="1140" y="141" width="2" height="1" fill="#111"/><rect x="1146" y="142" width="16" height="1" fill="#111"/><rect x="1165" y="142" width="16" height="1" fill="#111"/><rect x="1165" y="141" width="2" height="1" fill="#111"/><rect x="1182" y="142" width="3" height="1" fill="#111"/><rect x="1182" y="141" width="1" height="1" fill="#111"/><rect x="1189" y="142" width="8" height="1" fill="#111"/><rect x="1199" y="142" width="22" height="1" fill="#111"/><rect x="1209" y="141" width="2" height="1" fill="#111"/><rect x="1224" y="142" width="5" height="1" fill="#111"/><rect x="1233" y="142" width="12" height="1" fill="#111"/><rect x="1249" y="142" width="22" height="1" fill="#111"/><rect x="1272" y="142" width="16" height="1" fill="#111"/><rect x="1291" y="142" width="12" height="1" fill="#111"/><rect x="1305" y="142" width="8" height="1" fill="#111"/><rect x="1316" y="142" width="16" height="1" fill="#111"/><rect x="1335" y="142" width="3" height="1" fill="#111"/><rect x="1341" y="142" width="3" height="1" fill="#111"/><rect x="1346" y="142" width="3" height="1" fill="#111"/><rect x="1352" y="142" width="12" height="1" fill="#111"/><rect x="1367" y="142" width="16" height="1" fill="#111"/><rect x="1387" y="142" width="3" height="1" fill="#111"/><rect x="1391" y="142" width="8" height="1" fill="#111"/><rect x="1403" y="142" width="8" height="1" fill="#111"/><rect x="1414" y="142" width="5" height="1" fill="#111"/><rect x="1422" y="142" width="8" height="1" fill="#111"/><rect x="1433" y="142" width="8" height="1" fill="#111"/><rect x="1442" y="142" width="3" height="1" fill="#111"/><rect x="1447" y="142" width="8" height="1" fill="#111"/><rect x="1458" y="142" width="5" height="1" fill="#111"/><rect x="1467" y="142" width="22" height="1" fill="#111"/><rect x="1490" y="142" width="16" height="1" fill="#111"/><rect x="1509" y="142" width="22" height="1" fill="#111"/><rect x="1535" y="142" width="5" height="1" fill="#111"/><rect x="1536" y="141" width="3" height="1" fill="#111"/><rect x="1544" y="142" width="8" height="1" fill="#111"/><rect x="1544" y="141" width="1" height="1" fill="#111"/><rect x="1554" y="142" width="8" height="1" fill="#111"/><rect x="1564" y="142" width="8" height="1" fill="#111"/><rect x="1573" y="142" width="16" height="1" fill="#111"/><rect x="1591" y="142" width="12" height="1" fill="#111"/><rect x="1606" y="142" width="12" height="1" fill="#111"/><rect x="1622" y="142" width="8" height="1" fill="#111"/><rect x="1634" y="142" width="3" height="1" fill="#111"/><rect x="1639" y="142" width="5" height="1" fill="#111"/><rect x="1642" y="141" width="3" height="1" fill="#111"/><rect x="1646" y="142" width="3" height="1" fill="#111"/><rect x="1652" y="142" width="16" height="1" fill="#111"/><rect x="1670" y="142" width="3" height="1" fill="#111"/><rect x="1676" y="142" width="3" height="1" fill="#111"/><rect x="1680" y="142" width="3" height="1" fill="#111"/><rect x="1685" y="142" width="12" height="1" fill="#111"/><rect x="1698" y="142" width="12" height="1" fill="#111"/><rect x="1712" y="142" width="16" height="1" fill="#111"/><rect x="1729" y="142" width="16" height="1" fill="#111"/><rect x="1746" y="142" width="16" height="1" fill="#111"/><rect x="1748" y="141" width="2" height="1" fill="#111"/><rect x="1766" y="142" width="3" height="1" fill="#111"/><rect x="1771" y="142" width="3" height="1" fill="#111"/><rect x="1775" y="142" width="5" height="1" fill="#111"/><rect x="1777" y="141" width="1" height="1" fill="#111"/><rect x="1781" y="142" width="12" height="1" fill="#111"/><rect x="1797" y="142" width="3" height="1" fill="#111"/><rect x="1802" y="142" width="8" height="1" fill="#111"/><rect x="1814" y="142" width="3" height="1" fill="#111"/><rect x="1818" y="142" width="3" height="1" fill="#111"/><rect x="1822" y="142" width="3" height="1" fill="#111"/><rect x="1823" y="141" width="1" height="1" fill="#111"/><rect x="1826" y="142" width="16" height="1" fill="#111"/><rect x="787" y="127" width="2" height="16" fill="#111"/><rect x="850.7" y="1" width="2" height="156" fill="#ff0000"/><rect x="853.8" y="1" width="2" height="156" fill="#ff0000"/><rect x="953.8" y="1" width="2" height="156" fill="#ff0000"/><rect x="979.7" y="1" width="2" height="156" fill="#ff0000"/><rect x="987.9" y="1" width="2" height="156" fill="#ff0000"/><rect x="1033.8" y="1" width="2" height="156" fill="#ff0000"/><rect x="1048.8" y="1" width="2" height="156" fill="#ff0000"/><rect x="1059.9" y="1" width="1.2" height="156" fill="#ff0000"/><rect x="1081.8000000000002" y="1" width="1.2" height="156" fill="#ff0000"/><rect x="1116.9" y="1" width="2" height="156" fill="#ff0000"/><rect x="1206.9" y="1" width="2" height="156" fill="#ff0000"/><rect x="1392.9" y="1" width="3" height="156" fill="#ff0000"/><rect x="1410.0" y="1" width="5" height="156" fill="#ff0000"/><rect x="1751.1" y="1" width="2" height="156" fill="#ff0000"/><rect x="1813.9" y="1" width="2" height="156" fill="#ff0000"/></svg>
<div class="t" style="left:32.50px;top:665.69px;font-size:11px;line-height:11px;color:#b3b3b3;transform:scaleX(0.9500);transform-origin:left 0;">22,5 ms</div>
<div class="t" style="left:32.50px;top:704.69px;font-size:11px;line-height:11px;color:#b3b3b3;transform:scaleX(0.9500);transform-origin:left 0;">15 ms</div>
<div class="t" style="left:32.50px;top:744.69px;font-size:11px;line-height:11px;color:#b3b3b3;transform:scaleX(0.9500);transform-origin:left 0;">7,5 ms</div>
<div class="t" style="left:-8.79px;top:700.49px;font-size:11px;line-height:11px;color:#454545;transform:rotate(-90deg) scaleX(0.9438);transform-origin:center center;">Latency (ms)</div>
<div class="t" style="left:1865.20px;top:625.29px;font-size:11px;line-height:11px;color:#c80000;transform:scaleX(0.9399);transform-origin:left 0;">30</div>
<div class="t" style="left:1834.92px;top:706.59px;font-size:11px;line-height:11px;color:#d0284a;transform:rotate(90deg) scaleX(0.9209);transform-origin:center center;">Packet Loss %</div>
<div class="t" style="left:21.84px;top:784.69px;font-size:11px;line-height:11px;color:#27402c;transform:scaleX(0.9118);transform-origin:center 0;">16:50</div>
<div class="t" style="left:72.74px;top:784.69px;font-size:11px;line-height:11px;color:#27402c;transform:scaleX(0.9118);transform-origin:center 0;">16:55</div>
<div class="t" style="left:123.65px;top:784.69px;font-size:11px;line-height:11px;color:#27402c;transform:scaleX(0.9118);transform-origin:center 0;">17:00</div>
<div class="t" style="left:174.55px;top:784.69px;font-size:11px;line-height:11px;color:#27402c;transform:scaleX(0.9118);transform-origin:center 0;">17:05</div>
<div class="t" style="left:225.46px;top:784.69px;font-size:11px;line-height:11px;color:#27402c;transform:scaleX(0.9118);transform-origin:center 0;">17:10</div>
<div class="t" style="left:276.36px;top:784.69px;font-size:11px;line-height:11px;color:#27402c;transform:scaleX(0.9118);transform-origin:center 0;">17:15</div>
<div class="t" style="left:327.27px;top:784.69px;font-size:11px;line-height:11px;color:#27402c;transform:scaleX(0.9118);transform-origin:center 0;">17:20</div>
<div class="t" style="left:378.17px;top:784.69px;font-size:11px;line-height:11px;color:#27402c;transform:scaleX(0.9118);transform-origin:center 0;">17:25</div>
<div class="t" style="left:429.08px;top:784.69px;font-size:11px;line-height:11px;color:#27402c;transform:scaleX(0.9118);transform-origin:center 0;">17:30</div>
<div class="t" style="left:479.98px;top:784.69px;font-size:11px;line-height:11px;color:#27402c;transform:scaleX(0.9118);transform-origin:center 0;">17:35</div>
<div class="t" style="left:530.89px;top:784.69px;font-size:11px;line-height:11px;color:#27402c;transform:scaleX(0.9118);transform-origin:center 0;">17:40</div>
<div class="t" style="left:581.79px;top:784.69px;font-size:11px;line-height:11px;color:#27402c;transform:scaleX(0.9118);transform-origin:center 0;">17:45</div>
<div class="t" style="left:632.70px;top:784.69px;font-size:11px;line-height:11px;color:#27402c;transform:scaleX(0.9118);transform-origin:center 0;">17:50</div>
<div class="t" style="left:683.60px;top:784.69px;font-size:11px;line-height:11px;color:#27402c;transform:scaleX(0.9118);transform-origin:center 0;">17:55</div>
<div class="t" style="left:734.51px;top:784.69px;font-size:11px;line-height:11px;color:#27402c;transform:scaleX(0.9118);transform-origin:center 0;">18:00</div>
<div class="t" style="left:785.41px;top:784.69px;font-size:11px;line-height:11px;color:#27402c;transform:scaleX(0.9118);transform-origin:center 0;">18:05</div>
<div class="t" style="left:836.32px;top:784.69px;font-size:11px;line-height:11px;color:#27402c;transform:scaleX(0.9118);transform-origin:center 0;">18:10</div>
<div class="t" style="left:887.22px;top:784.69px;font-size:11px;line-height:11px;color:#27402c;transform:scaleX(0.9118);transform-origin:center 0;">18:15</div>
<div class="t" style="left:938.13px;top:784.69px;font-size:11px;line-height:11px;color:#27402c;transform:scaleX(0.9118);transform-origin:center 0;">18:20</div>
<div class="t" style="left:989.03px;top:784.69px;font-size:11px;line-height:11px;color:#27402c;transform:scaleX(0.9118);transform-origin:center 0;">18:25</div>
<div class="t" style="left:1039.94px;top:784.69px;font-size:11px;line-height:11px;color:#27402c;transform:scaleX(0.9118);transform-origin:center 0;">18:30</div>
<div class="t" style="left:1090.84px;top:784.69px;font-size:11px;line-height:11px;color:#27402c;transform:scaleX(0.9118);transform-origin:center 0;">18:35</div>
<div class="t" style="left:1141.75px;top:784.69px;font-size:11px;line-height:11px;color:#27402c;transform:scaleX(0.9118);transform-origin:center 0;">18:40</div>
<div class="t" style="left:1192.65px;top:784.69px;font-size:11px;line-height:11px;color:#27402c;transform:scaleX(0.9118);transform-origin:center 0;">18:45</div>
<div class="t" style="left:1243.56px;top:784.69px;font-size:11px;line-height:11px;color:#27402c;transform:scaleX(0.9118);transform-origin:center 0;">18:50</div>
<div class="t" style="left:1294.46px;top:784.69px;font-size:11px;line-height:11px;color:#27402c;transform:scaleX(0.9118);transform-origin:center 0;">18:55</div>
<div class="t" style="left:1345.37px;top:784.69px;font-size:11px;line-height:11px;color:#27402c;transform:scaleX(0.9118);transform-origin:center 0;">19:00</div>
<div class="t" style="left:1396.27px;top:784.69px;font-size:11px;line-height:11px;color:#27402c;transform:scaleX(0.9118);transform-origin:center 0;">19:05</div>
<div class="t" style="left:1447.18px;top:784.69px;font-size:11px;line-height:11px;color:#27402c;transform:scaleX(0.9118);transform-origin:center 0;">19:10</div>
<div class="t" style="left:1498.08px;top:784.69px;font-size:11px;line-height:11px;color:#27402c;transform:scaleX(0.9118);transform-origin:center 0;">19:15</div>
<div class="t" style="left:1548.99px;top:784.69px;font-size:11px;line-height:11px;color:#27402c;transform:scaleX(0.9118);transform-origin:center 0;">19:20</div>
<div class="t" style="left:1599.89px;top:784.69px;font-size:11px;line-height:11px;color:#27402c;transform:scaleX(0.9118);transform-origin:center 0;">19:25</div>
<div class="t" style="left:1650.80px;top:784.69px;font-size:11px;line-height:11px;color:#27402c;transform:scaleX(0.9118);transform-origin:center 0;">19:30</div>
<div class="t" style="left:1701.70px;top:784.69px;font-size:11px;line-height:11px;color:#27402c;transform:scaleX(0.9118);transform-origin:center 0;">19:35</div>
<div class="t" style="left:1752.61px;top:784.69px;font-size:11px;line-height:11px;color:#27402c;transform:scaleX(0.9118);transform-origin:center 0;">19:40</div>
<div class="t" style="left:1803.51px;top:784.69px;font-size:11px;line-height:11px;color:#27402c;transform:scaleX(0.9118);transform-origin:center 0;">19:45</div>
<div class="t" style="left:1854.42px;top:784.69px;font-size:11px;line-height:11px;color:#27402c;transform:scaleX(0.9118);transform-origin:center 0;">19:50</div>
<div class="b" style="left:35px;top:784px;width:1.2px;height:3px;background:#111"></div><div class="b" style="left:86px;top:784px;width:1.2px;height:3px;background:#111"></div><div class="b" style="left:137px;top:784px;width:1.2px;height:3px;background:#111"></div><div class="b" style="left:188px;top:784px;width:1.2px;height:3px;background:#111"></div><div class="b" style="left:239px;top:784px;width:1.2px;height:3px;background:#111"></div><div class="b" style="left:290px;top:784px;width:1.2px;height:3px;background:#111"></div><div class="b" style="left:341px;top:784px;width:1.2px;height:3px;background:#111"></div><div class="b" style="left:391px;top:784px;width:1.2px;height:3px;background:#111"></div><div class="b" style="left:442px;top:784px;width:1.2px;height:3px;background:#111"></div><div class="b" style="left:493px;top:784px;width:1.2px;height:3px;background:#111"></div><div class="b" style="left:544px;top:784px;width:1.2px;height:3px;background:#111"></div><div class="b" style="left:595px;top:784px;width:1.2px;height:3px;background:#111"></div><div class="b" style="left:646px;top:784px;width:1.2px;height:3px;background:#111"></div><div class="b" style="left:697px;top:784px;width:1.2px;height:3px;background:#111"></div><div class="b" style="left:748px;top:784px;width:1.2px;height:3px;background:#111"></div><div class="b" style="left:799px;top:784px;width:1.2px;height:3px;background:#111"></div><div class="b" style="left:850px;top:784px;width:1.2px;height:3px;background:#111"></div><div class="b" style="left:900px;top:784px;width:1.2px;height:3px;background:#111"></div><div class="b" style="left:951px;top:784px;width:1.2px;height:3px;background:#111"></div><div class="b" style="left:1002px;top:784px;width:1.2px;height:3px;background:#111"></div><div class="b" style="left:1053px;top:784px;width:1.2px;height:3px;background:#111"></div><div class="b" style="left:1104px;top:784px;width:1.2px;height:3px;background:#111"></div><div class="b" style="left:1155px;top:784px;width:1.2px;height:3px;background:#111"></div><div class="b" style="left:1206px;top:784px;width:1.2px;height:3px;background:#111"></div><div class="b" style="left:1257px;top:784px;width:1.2px;height:3px;background:#111"></div><div class="b" style="left:1308px;top:784px;width:1.2px;height:3px;background:#111"></div><div class="b" style="left:1359px;top:784px;width:1.2px;height:3px;background:#111"></div><div class="b" style="left:1410px;top:784px;width:1.2px;height:3px;background:#111"></div><div class="b" style="left:1460px;top:784px;width:1.2px;height:3px;background:#111"></div><div class="b" style="left:1511px;top:784px;width:1.2px;height:3px;background:#111"></div><div class="b" style="left:1562px;top:784px;width:1.2px;height:3px;background:#111"></div><div class="b" style="left:1613px;top:784px;width:1.2px;height:3px;background:#111"></div><div class="b" style="left:1664px;top:784px;width:1.2px;height:3px;background:#111"></div><div class="b" style="left:1715px;top:784px;width:1.2px;height:3px;background:#111"></div><div class="b" style="left:1766px;top:784px;width:1.2px;height:3px;background:#111"></div><div class="b" style="left:1817px;top:784px;width:1.2px;height:3px;background:#111"></div>
<div class="t" style="left:31.50px;top:804.29px;font-size:11px;line-height:11px;color:#3a3a3a;transform:scaleX(0.9602);transform-origin:left 0;">www.seznam.cz (77.75.79.222) hop 14</div>
<div class="t" style="left:1740.50px;top:804.87px;font-size:11.5px;line-height:11.5px;color:#333;transform:scaleX(0.9223);transform-origin:left 0;">3 hours (16:49 - 19:49)</div>
<svg style="left:1852px;top:804.5px" width="12" height="12"><circle cx="6" cy="6" r="5.6" fill="#e2e2e2"/><path d="M3.2 4.8L6 7.5L8.8 4.8" stroke="#8a8a8a" stroke-width="1.1" fill="none"/></svg>
<div class="b" style="left:31px;top:818px;width:1833px;height:25px;background:#fcfcfc;border-top:1px solid #505050;border-bottom:1px solid #505050;border-left:1px solid #505050"></div>
<svg style="left:32px;top:828px" width="1832" height="1"><line x1="0" y1="0.5" x2="1832" y2="0.5" stroke="#505050" stroke-width="1" stroke-dasharray="4 5"/></svg>
<div class="t" style="left:927.00px;top:818.53px;font-size:10px;line-height:10px;color:#8b0000;transform:scaleX(0.9181);transform-origin:left 0;">Jitter (ms)</div>
<div class="t" style="left:15.36px;top:822.79px;font-size:11px;line-height:11px;color:#990000;transform:scaleX(0.9235);transform-origin:right 0;">35</div>
<div class="t" style="left:15.36px;top:844.69px;font-size:11px;line-height:11px;color:#222;transform:scaleX(0.9235);transform-origin:right 0;">30</div>
<div class="t" style="left:21.48px;top:991.69px;font-size:11px;line-height:11px;color:#222;transform:scaleX(0.9500);transform-origin:right 0;">0</div>
<svg style="left:31px;top:847px;overflow:hidden" width="1833" height="158" shape-rendering="crispEdges"><rect x="1" y="1" width="753" height="156" fill="#cccccc"/><rect x="754" y="1" width="1079" height="156" fill="#e0efd6"/><rect x="1" y="39" width="1832" height="1" fill="rgba(0,0,0,0.085)"/><rect x="1" y="78" width="1832" height="1" fill="rgba(0,0,0,0.085)"/><rect x="1" y="118" width="1832" height="1" fill="rgba(0,0,0,0.085)"/><rect x="0" y="0" width="1" height="158" fill="#505050"/><rect x="0" y="157" width="1833" height="1" fill="#666"/><rect x="755" y="101" width="1078" height="1.3" fill="#111"/><rect x="758" y="99" width="18" height="3" fill="#111"/><rect x="780" y="99" width="25" height="3" fill="#111"/><rect x="809" y="99" width="25" height="3" fill="#111"/><rect x="843" y="99" width="3" height="3" fill="#111"/><rect x="852" y="99" width="5" height="3" fill="#111"/><rect x="859" y="99" width="5" height="3" fill="#111"/><rect x="866" y="99" width="8" height="3" fill="#111"/><rect x="880" y="99" width="5" height="3" fill="#111"/><rect x="891" y="99" width="18" height="3" fill="#111"/><rect x="911" y="99" width="18" height="3" fill="#111"/><rect x="932" y="99" width="3" height="3" fill="#111"/><rect x="938" y="99" width="12" height="3" fill="#111"/><rect x="954" y="99" width="5" height="3" fill="#111"/><rect x="965" y="99" width="5" height="3" fill="#111"/><rect x="972" y="99" width="5" height="3" fill="#111"/><rect x="986" y="99" width="18" height="3" fill="#111"/><rect x="1010" y="99" width="5" height="3" fill="#111"/><rect x="1018" y="99" width="3" height="3" fill="#111"/><rect x="1023" y="99" width="5" height="3" fill="#111"/><rect x="1031" y="99" width="5" height="3" fill="#111"/><rect x="1039" y="99" width="8" height="3" fill="#111"/><rect x="1051" y="99" width="5" height="3" fill="#111"/><rect x="1065" y="99" width="25" height="3" fill="#111"/><rect x="1093" y="99" width="5" height="3" fill="#111"/><rect x="1101" y="99" width="12" height="3" fill="#111"/><rect x="1117" y="99" width="3" height="3" fill="#111"/><rect x="1124" y="99" width="12" height="3" fill="#111"/><rect x="1139" y="99" width="5" height="3" fill="#111"/><rect x="1148" y="99" width="3" height="3" fill="#111"/><rect x="1155" y="99" width="8" height="3" fill="#111"/><rect x="1172" y="99" width="18" height="3" fill="#111"/><rect x="1192" y="99" width="18" height="3" fill="#111"/><rect x="1214" y="99" width="3" height="3" fill="#111"/><rect x="1221" y="99" width="8" height="3" fill="#111"/><rect x="1233" y="99" width="12" height="3" fill="#111"/><rect x="1249" y="99" width="5" height="3" fill="#111"/><rect x="1260" y="99" width="12" height="3" fill="#111"/><rect x="1275" y="99" width="3" height="3" fill="#111"/><rect x="1282" y="99" width="3" height="3" fill="#111"/><rect x="1289" y="99" width="12" height="3" fill="#111"/><rect x="1303" y="99" width="18" height="3" fill="#111"/><rect x="1327" y="99" width="8" height="3" fill="#111"/><rect x="1341" y="99" width="18" height="3" fill="#111"/><rect x="1361" y="99" width="12" height="3" fill="#111"/><rect x="1375" y="99" width="25" height="3" fill="#111"/><rect x="1403" y="99" width="18" height="3" fill="#111"/><rect x="1424" y="99" width="3" height="3" fill="#111"/><rect x="1430" y="99" width="12" height="3" fill="#111"/><rect x="1446" y="99" width="18" height="3" fill="#111"/><rect x="1468" y="99" width="18" height="3" fill="#111"/><rect x="1490" y="99" width="12" height="3" fill="#111"/><rect x="1504" y="99" width="18" height="3" fill="#111"/><rect x="1526" y="99" width="8" height="3" fill="#111"/><rect x="1536" y="99" width="12" height="3" fill="#111"/><rect x="1550" y="99" width="5" height="3" fill="#111"/><rect x="1559" y="99" width="18" height="3" fill="#111"/><rect x="1586" y="99" width="8" height="3" fill="#111"/><rect x="1597" y="99" width="8" height="3" fill="#111"/><rect x="1609" y="99" width="25" height="3" fill="#111"/><rect x="1643" y="99" width="3" height="3" fill="#111"/><rect x="1650" y="99" width="25" height="3" fill="#111"/><rect x="1679" y="99" width="8" height="3" fill="#111"/><rect x="1690" y="99" width="3" height="3" fill="#111"/><rect x="1696" y="99" width="25" height="3" fill="#111"/><rect x="1725" y="99" width="12" height="3" fill="#111"/><rect x="1740" y="99" width="25" height="3" fill="#111"/><rect x="1767" y="99" width="3" height="3" fill="#111"/><rect x="1779" y="99" width="18" height="3" fill="#111"/><rect x="1803" y="99" width="3" height="3" fill="#111"/><rect x="1809" y="99" width="25" height="3" fill="#111"/><path d="M855.5 101V104H858.5V101" stroke="#111" stroke-width="1.2" fill="none"/></svg>
<div class="t" style="left:32.50px;top:886.69px;font-size:11px;line-height:11px;color:#b3b3b3;transform:scaleX(0.9500);transform-origin:left 0;">22,5 ms</div>
<div class="t" style="left:32.50px;top:925.69px;font-size:11px;line-height:11px;color:#b3b3b3;transform:scaleX(0.9500);transform-origin:left 0;">15 ms</div>
<div class="t" style="left:32.50px;top:965.69px;font-size:11px;line-height:11px;color:#b3b3b3;transform:scaleX(0.9500);transform-origin:left 0;">7,5 ms</div>
<div class="t" style="left:-8.79px;top:921.49px;font-size:11px;line-height:11px;color:#454545;transform:rotate(-90deg) scaleX(0.9438);transform-origin:center center;">Latency (ms)</div>
<div class="t" style="left:1865.20px;top:846.29px;font-size:11px;line-height:11px;color:#c80000;transform:scaleX(0.9399);transform-origin:left 0;">30</div>
<div class="t" style="left:1834.92px;top:927.59px;font-size:11px;line-height:11px;color:#d0284a;transform:rotate(90deg) scaleX(0.9209);transform-origin:center center;">Packet Loss %</div>
<div class="t" style="left:21.84px;top:1005.69px;font-size:11px;line-height:11px;color:#27402c;transform:scaleX(0.9118);transform-origin:center 0;">16:50</div>
<div class="t" style="left:72.74px;top:1005.69px;font-size:11px;line-height:11px;color:#27402c;transform:scaleX(0.9118);transform-origin:center 0;">16:55</div>
<div class="t" style="left:123.65px;top:1005.69px;font-size:11px;line-height:11px;color:#27402c;transform:scaleX(0.9118);transform-origin:center 0;">17:00</div>
<div class="t" style="left:174.55px;top:1005.69px;font-size:11px;line-height:11px;color:#27402c;transform:scaleX(0.9118);transform-origin:center 0;">17:05</div>
<div class="t" style="left:225.46px;top:1005.69px;font-size:11px;line-height:11px;color:#27402c;transform:scaleX(0.9118);transform-origin:center 0;">17:10</div>
<div class="t" style="left:276.36px;top:1005.69px;font-size:11px;line-height:11px;color:#27402c;transform:scaleX(0.9118);transform-origin:center 0;">17:15</div>
<div class="t" style="left:327.27px;top:1005.69px;font-size:11px;line-height:11px;color:#27402c;transform:scaleX(0.9118);transform-origin:center 0;">17:20</div>
<div class="t" style="left:378.17px;top:1005.69px;font-size:11px;line-height:11px;color:#27402c;transform:scaleX(0.9118);transform-origin:center 0;">17:25</div>
<div class="t" style="left:429.08px;top:1005.69px;font-size:11px;line-height:11px;color:#27402c;transform:scaleX(0.9118);transform-origin:center 0;">17:30</div>
<div class="t" style="left:479.98px;top:1005.69px;font-size:11px;line-height:11px;color:#27402c;transform:scaleX(0.9118);transform-origin:center 0;">17:35</div>
<div class="t" style="left:530.89px;top:1005.69px;font-size:11px;line-height:11px;color:#27402c;transform:scaleX(0.9118);transform-origin:center 0;">17:40</div>
<div class="t" style="left:581.79px;top:1005.69px;font-size:11px;line-height:11px;color:#27402c;transform:scaleX(0.9118);transform-origin:center 0;">17:45</div>
<div class="t" style="left:632.70px;top:1005.69px;font-size:11px;line-height:11px;color:#27402c;transform:scaleX(0.9118);transform-origin:center 0;">17:50</div>
<div class="t" style="left:683.60px;top:1005.69px;font-size:11px;line-height:11px;color:#27402c;transform:scaleX(0.9118);transform-origin:center 0;">17:55</div>
<div class="t" style="left:734.51px;top:1005.69px;font-size:11px;line-height:11px;color:#27402c;transform:scaleX(0.9118);transform-origin:center 0;">18:00</div>
<div class="t" style="left:785.41px;top:1005.69px;font-size:11px;line-height:11px;color:#27402c;transform:scaleX(0.9118);transform-origin:center 0;">18:05</div>
<div class="t" style="left:836.32px;top:1005.69px;font-size:11px;line-height:11px;color:#27402c;transform:scaleX(0.9118);transform-origin:center 0;">18:10</div>
<div class="t" style="left:887.22px;top:1005.69px;font-size:11px;line-height:11px;color:#27402c;transform:scaleX(0.9118);transform-origin:center 0;">18:15</div>
<div class="t" style="left:938.13px;top:1005.69px;font-size:11px;line-height:11px;color:#27402c;transform:scaleX(0.9118);transform-origin:center 0;">18:20</div>
<div class="t" style="left:989.03px;top:1005.69px;font-size:11px;line-height:11px;color:#27402c;transform:scaleX(0.9118);transform-origin:center 0;">18:25</div>
<div class="t" style="left:1039.94px;top:1005.69px;font-size:11px;line-height:11px;color:#27402c;transform:scaleX(0.9118);transform-origin:center 0;">18:30</div>
<div class="t" style="left:1090.84px;top:1005.69px;font-size:11px;line-height:11px;color:#27402c;transform:scaleX(0.9118);transform-origin:center 0;">18:35</div>
<div class="t" style="left:1141.75px;top:1005.69px;font-size:11px;line-height:11px;color:#27402c;transform:scaleX(0.9118);transform-origin:center 0;">18:40</div>
<div class="t" style="left:1192.65px;top:1005.69px;font-size:11px;line-height:11px;color:#27402c;transform:scaleX(0.9118);transform-origin:center 0;">18:45</div>
<div class="t" style="left:1243.56px;top:1005.69px;font-size:11px;line-height:11px;color:#27402c;transform:scaleX(0.9118);transform-origin:center 0;">18:50</div>
<div class="t" style="left:1294.46px;top:1005.69px;font-size:11px;line-height:11px;color:#27402c;transform:scaleX(0.9118);transform-origin:center 0;">18:55</div>
<div class="t" style="left:1345.37px;top:1005.69px;font-size:11px;line-height:11px;color:#27402c;transform:scaleX(0.9118);transform-origin:center 0;">19:00</div>
<div class="t" style="left:1396.27px;top:1005.69px;font-size:11px;line-height:11px;color:#27402c;transform:scaleX(0.9118);transform-origin:center 0;">19:05</div>
<div class="t" style="left:1447.18px;top:1005.69px;font-size:11px;line-height:11px;color:#27402c;transform:scaleX(0.9118);transform-origin:center 0;">19:10</div>
<div class="t" style="left:1498.08px;top:1005.69px;font-size:11px;line-height:11px;color:#27402c;transform:scaleX(0.9118);transform-origin:center 0;">19:15</div>
<div class="t" style="left:1548.99px;top:1005.69px;font-size:11px;line-height:11px;color:#27402c;transform:scaleX(0.9118);transform-origin:center 0;">19:20</div>
<div class="t" style="left:1599.89px;top:1005.69px;font-size:11px;line-height:11px;color:#27402c;transform:scaleX(0.9118);transform-origin:center 0;">19:25</div>
<div class="t" style="left:1650.80px;top:1005.69px;font-size:11px;line-height:11px;color:#27402c;transform:scaleX(0.9118);transform-origin:center 0;">19:30</div>
<div class="t" style="left:1701.70px;top:1005.69px;font-size:11px;line-height:11px;color:#27402c;transform:scaleX(0.9118);transform-origin:center 0;">19:35</div>
<div class="t" style="left:1752.61px;top:1005.69px;font-size:11px;line-height:11px;color:#27402c;transform:scaleX(0.9118);transform-origin:center 0;">19:40</div>
<div class="t" style="left:1803.51px;top:1005.69px;font-size:11px;line-height:11px;color:#27402c;transform:scaleX(0.9118);transform-origin:center 0;">19:45</div>
<div class="t" style="left:1854.42px;top:1005.69px;font-size:11px;line-height:11px;color:#27402c;transform:scaleX(0.9118);transform-origin:center 0;">19:50</div>
<div class="b" style="left:35px;top:1005px;width:1.2px;height:3px;background:#111"></div><div class="b" style="left:86px;top:1005px;width:1.2px;height:3px;background:#111"></div><div class="b" style="left:137px;top:1005px;width:1.2px;height:3px;background:#111"></div><div class="b" style="left:188px;top:1005px;width:1.2px;height:3px;background:#111"></div><div class="b" style="left:239px;top:1005px;width:1.2px;height:3px;background:#111"></div><div class="b" style="left:290px;top:1005px;width:1.2px;height:3px;background:#111"></div><div class="b" style="left:341px;top:1005px;width:1.2px;height:3px;background:#111"></div><div class="b" style="left:391px;top:1005px;width:1.2px;height:3px;background:#111"></div><div class="b" style="left:442px;top:1005px;width:1.2px;height:3px;background:#111"></div><div class="b" style="left:493px;top:1005px;width:1.2px;height:3px;background:#111"></div><div class="b" style="left:544px;top:1005px;width:1.2px;height:3px;background:#111"></div><div class="b" style="left:595px;top:1005px;width:1.2px;height:3px;background:#111"></div><div class="b" style="left:646px;top:1005px;width:1.2px;height:3px;background:#111"></div><div class="b" style="left:697px;top:1005px;width:1.2px;height:3px;background:#111"></div><div class="b" style="left:748px;top:1005px;width:1.2px;height:3px;background:#111"></div><div class="b" style="left:799px;top:1005px;width:1.2px;height:3px;background:#111"></div><div class="b" style="left:850px;top:1005px;width:1.2px;height:3px;background:#111"></div><div class="b" style="left:900px;top:1005px;width:1.2px;height:3px;background:#111"></div><div class="b" style="left:951px;top:1005px;width:1.2px;height:3px;background:#111"></div><div class="b" style="left:1002px;top:1005px;width:1.2px;height:3px;background:#111"></div><div class="b" style="left:1053px;top:1005px;width:1.2px;height:3px;background:#111"></div><div class="b" style="left:1104px;top:1005px;width:1.2px;height:3px;background:#111"></div><div class="b" style="left:1155px;top:1005px;width:1.2px;height:3px;background:#111"></div><div class="b" style="left:1206px;top:1005px;width:1.2px;height:3px;background:#111"></div><div class="b" style="left:1257px;top:1005px;width:1.2px;height:3px;background:#111"></div><div class="b" style="left:1308px;top:1005px;width:1.2px;height:3px;background:#111"></div><div class="b" style="left:1359px;top:1005px;width:1.2px;height:3px;background:#111"></div><div class="b" style="left:1410px;top:1005px;width:1.2px;height:3px;background:#111"></div><div class="b" style="left:1460px;top:1005px;width:1.2px;height:3px;background:#111"></div><div class="b" style="left:1511px;top:1005px;width:1.2px;height:3px;background:#111"></div><div class="b" style="left:1562px;top:1005px;width:1.2px;height:3px;background:#111"></div><div class="b" style="left:1613px;top:1005px;width:1.2px;height:3px;background:#111"></div><div class="b" style="left:1664px;top:1005px;width:1.2px;height:3px;background:#111"></div><div class="b" style="left:1715px;top:1005px;width:1.2px;height:3px;background:#111"></div><div class="b" style="left:1766px;top:1005px;width:1.2px;height:3px;background:#111"></div><div class="b" style="left:1817px;top:1005px;width:1.2px;height:3px;background:#111"></div>
<div class="b" style="left:1px;top:784px;width:30px;height:14px;background:#f5f5f5;"></div>
<div class="b" style="left:1px;top:1005px;width:30px;height:14px;background:#f5f5f5;"></div>
<div class="b" style="left:1864px;top:784px;width:30px;height:14px;background:#f5f5f5;"></div>
<div class="b" style="left:1864px;top:1005px;width:30px;height:14px;background:#f5f5f5;"></div>
</body></html>
